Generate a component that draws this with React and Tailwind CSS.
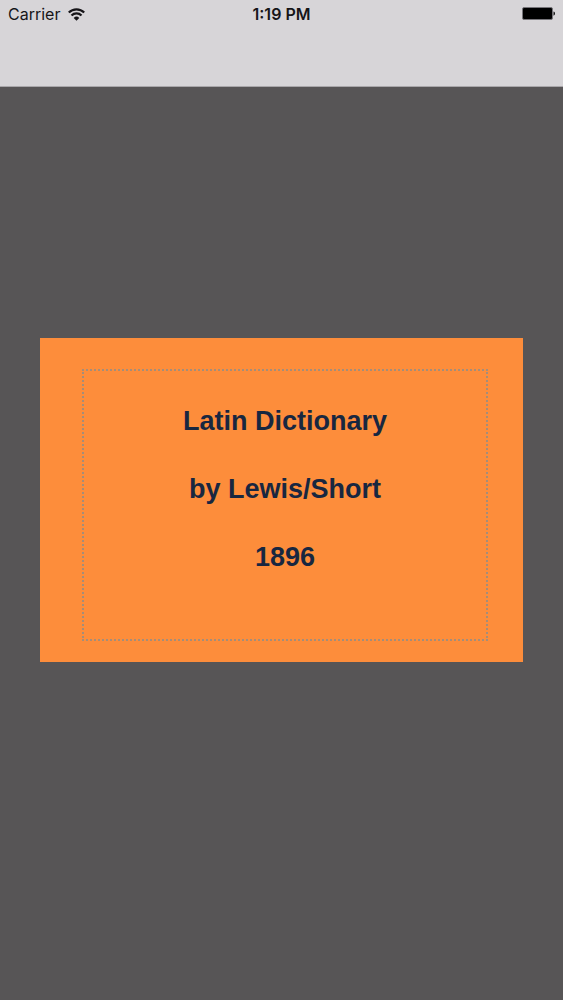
function WifiIcon() {
  return (
    <svg
      viewBox="0 0 17 13"
      className="w-[17px] h-[13px]"
      fill="none"
      stroke="currentColor"
      strokeWidth="2.2"
      aria-hidden="true"
    >
      <path d="M0.8 4.5a10.9 10.9 0 0 1 15.4 0" />
      <path d="M3.5 7.5a7.1 7.1 0 0 1 10 0" />
      <path d="M8.5 12.7 5.7 9.9a4 4 0 0 1 5.6 0z" fill="currentColor" stroke="none" />
    </svg>
  );
}

function BatteryIcon() {
  return (
    <svg viewBox="0 0 34 14" className="w-[34px] h-[14px]" aria-hidden="true">
      <rect x="1.5" y="0.5" width="30" height="12" rx="1.5" fill="#000" stroke="#77757a" />
      <path d="M32.5 4.5c1 .3 1.5 1 1.5 2.1s-.5 1.800-1.500 2.100z" fill="#111" />
    </svg>
  );
}

const titleLines = ["Latin Dictionary", "by Lewis/Short", "1896"];

export default function App() {
  return (
    <div className="min-h-screen flex flex-col bg-[#575556]">
      <header className="h-[87px] bg-[#d7d5d8] border-b border-[#a9a7aa] text-[#161518] font-[Inter,sans-serif]">
        <div className="grid grid-cols-3 items-center h-7 px-2 text-base leading-6">
          <div className="flex items-center gap-2">
            <span>Carrier</span>
            <WifiIcon />
          </div>
          <span className="text-center font-semibold">1:19 PM</span>
          <div className="flex justify-end">
            <BatteryIcon />
          </div>
        </div>
      </header>

      {/* bottom padding balances the header so the card sits mid-screen */}
      <main className="flex-1 flex items-center justify-center px-10 pb-[87px]">
        <section className="w-full bg-[#fd8d3b] pt-[31px] pr-[35px] pb-[21px] pl-[42px]">
          <div className="border-2 border-dotted border-[#a58d78] pt-4 pb-12">
            <h1 className="text-center text-[27px] leading-[68px] font-bold text-[#182740] font-['Liberation_Sans',Arial,sans-serif]">
              {titleLines.map((line) => (
                <span key={line} className="block">
                  {line}
                </span>
              ))}
            </h1>
          </div>
        </section>
      </main>
    </div>
  );
}
